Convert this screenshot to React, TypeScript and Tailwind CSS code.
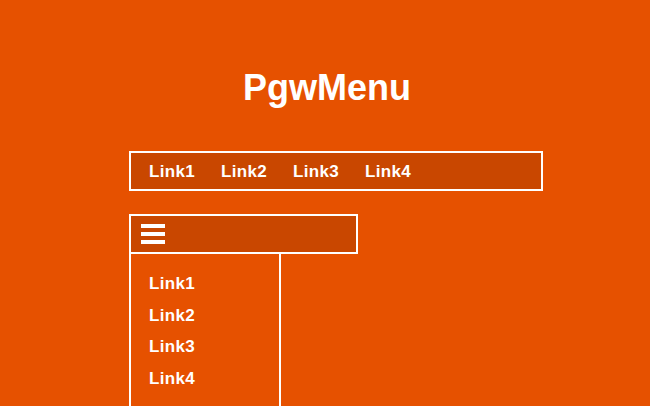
const links = ['Link1', 'Link2', 'Link3', 'Link4'];

const Hamburger = () => (
  <svg width="24" height="20" viewBox="0 0 24 20" className="block">
    <rect x="0" y="0" width="24" height="4" fill="#ffffff" />
    <rect x="0" y="8" width="24" height="4" fill="#ffffff" />
    <rect x="0" y="16" width="24" height="4" fill="#ffffff" />
  </svg>
);

export default function App() {
  return (
    <div className="h-[406px] overflow-hidden bg-[#e65100] font-['Liberation_Sans',Arial,sans-serif] text-white font-bold">
      {/* Title */}
      <h1 className="pt-[68px] text-center text-[36px] leading-[40px] pl-[4px]">PgwMenu</h1>

      <div className="ml-[129px] mt-[43px]">
        {/* Horizontal menu */}
        <nav className="w-[414px] h-[40px] border-2 border-white bg-[#c94700] flex items-center pl-[18px] pt-[2px] text-[17px] tracking-[0.3px]">
          {links.map((l) => (
            <a key={l} href="#" className="w-[72px]">{l}</a>
          ))}
        </nav>

        {/* Collapsed menu */}
        <div className="mt-[23px]">
          <div className="w-[229px] h-[40px] border-2 border-white bg-[#c94700] flex items-center pl-[10px]">
            <Hamburger />
          </div>
          <ul className="w-[152px] border-x-2 border-white pt-[19px] pb-[20px] text-[17px] tracking-[0.3px]">
            {links.map((l) => (
              <li key={l} className="pl-[18px] h-[31.7px] leading-[22px]">
                <a href="#">{l}</a>
              </li>
            ))}
          </ul>
        </div>
      </div>
    </div>
  );
}
